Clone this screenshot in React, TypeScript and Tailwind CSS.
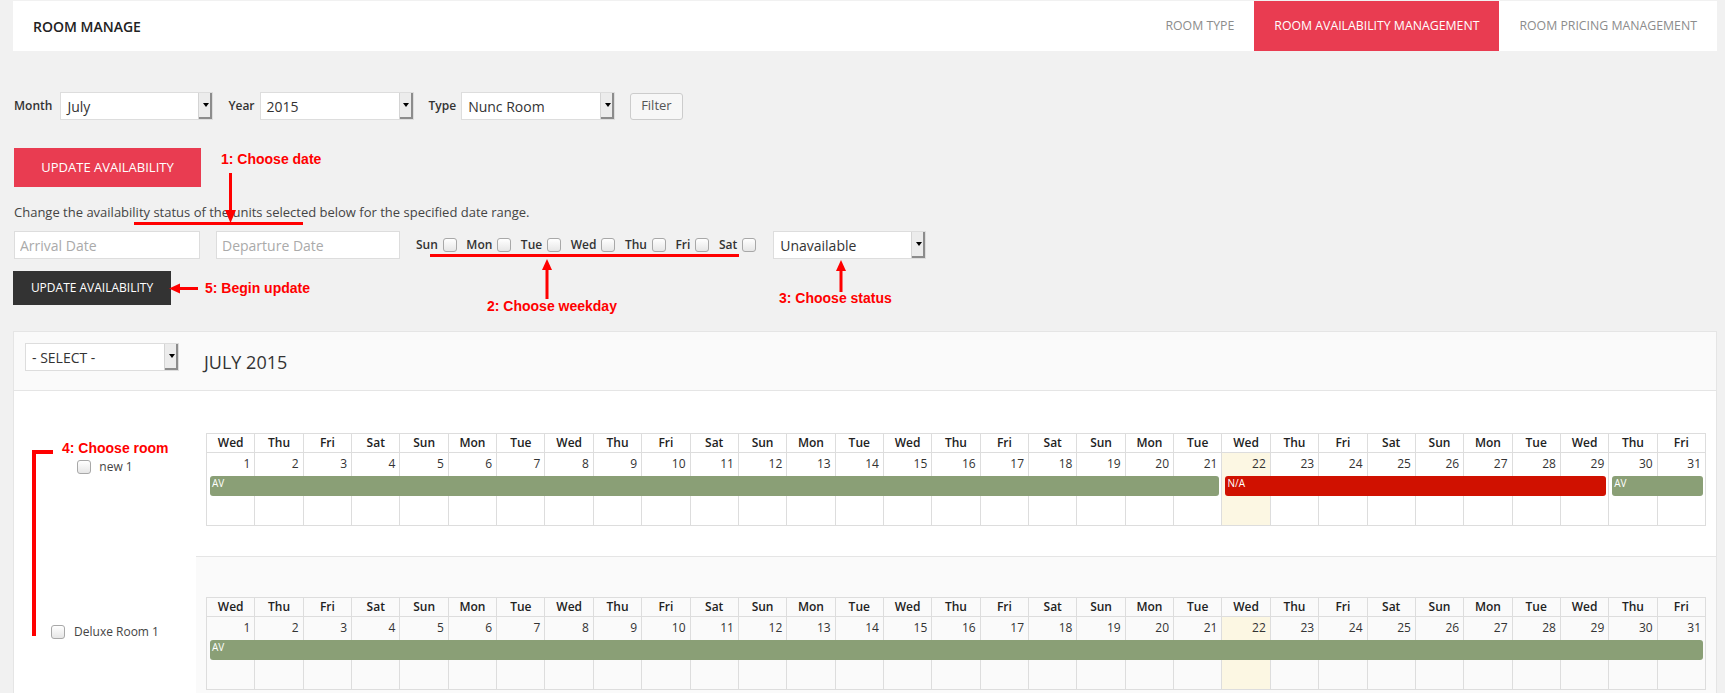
import React from 'react';
import clsx from 'clsx';

const WEEK = ['Wed', 'Thu', 'Fri', 'Sat', 'Sun', 'Mon', 'Tue'];
const DAYS = Array.from({ length: 31 }, (_, i) => ({ name: WEEK[i % 7], date: i + 1 }));
const TODAY = 22;

type Bar = { label: string; from: number; to: number; tone: 'av' | 'na' };

const ROOMS: { name: string; bars: Bar[] }[] = [
  {
    name: 'new 1',
    bars: [
      { label: 'AV', from: 1, to: 21, tone: 'av' },
      { label: 'N/A', from: 22, to: 29, tone: 'na' },
      { label: 'AV', from: 30, to: 31, tone: 'av' },
    ],
  },
  { name: 'Deluxe Room 1', bars: [{ label: 'AV', from: 1, to: 31, tone: 'av' }] },
];

const Caret = () => (
  <div className="flex w-[14px] shrink-0 items-center justify-center border-l border-[#d4d4d4] bg-[#ececec] shadow-[inset_-2px_-2px_0_#8c8c8c]">
    <span className="mb-[2px] border-x-[3px] border-t-[4px] border-x-transparent border-t-black" />
  </div>
);

const Select = ({ value, className }: { value: string; className?: string }) => (
  <div className={clsx('flex h-[28px] border border-[#ddd] bg-white', className)}>
    <div className="flex flex-1 items-center pl-[6px] text-[14px] text-[#333]">{value}</div>
    <Caret />
  </div>
);

const Check = () => (
  <span className="inline-block h-[14px] w-[14px] shrink-0 rounded-[3px] border border-[#a8a8a8] bg-linear-to-b from-white to-[#e6e6e6]" />
);

const Calendar = ({ bars }: { bars: Bar[] }) => (
  <div className="border-l border-t border-[#ddd] text-[12px]">
    <div className="grid grid-cols-[repeat(31,minmax(0,1fr))]">
      {DAYS.map((d) => (
        <div key={d.date} className="h-[19px] border-b border-r border-[#ddd] text-center font-semibold leading-[18px] text-[#222]">
          {d.name}
        </div>
      ))}
    </div>
    <div className="grid grid-cols-[repeat(31,minmax(0,1fr))] grid-rows-[22px_21px_30px]">
      {DAYS.map((d, i) => (
        <div
          key={'bg' + d.date}
          className={clsx('border-b border-r border-[#ddd]', d.date === TODAY && 'bg-[#fcf7e3]')}
          style={{ gridColumn: i + 1, gridRow: '1 / 4' }}
        />
      ))}
      {DAYS.map((d, i) => (
        <div key={'n' + d.date} className="pr-[5px] text-right leading-[22px] text-[#333]" style={{ gridColumn: i + 1, gridRow: 1 }}>
          {d.date}
        </div>
      ))}
      {bars.map((b) => (
        <div
          key={b.from}
          className={clsx(
            'mx-[3px] mt-px h-[20px] rounded-[3px] pl-[2px] text-[10px] leading-[15px] text-white',
            b.tone === 'av' ? 'bg-[#8a9f76]' : 'bg-[#d01100]'
          )}
          style={{ gridColumn: `${b.from} / ${b.to + 1}`, gridRow: 2 }}
        >
          {b.label}
        </div>
      ))}
    </div>
  </div>
);

const Note = ({ text, className }: { text: string; className: string }) => (
  <div className={clsx("absolute whitespace-nowrap font-['Liberation_Sans',Arial,sans-serif] text-[14px] font-bold leading-[16px] text-[#ff0000]", className)}>
    {text}
  </div>
);

export default function App() {
  return (
    <div className="relative min-h-screen overflow-hidden bg-[#f1f1f1] font-['Open_Sans','Noto_Sans',sans-serif] text-[#333]">
      <div className="pl-[13px] pr-[8px] pt-px">
        <header className="flex h-[50px] items-stretch justify-between bg-white">
          <div className="flex items-center pl-[20px] text-[14px] font-semibold text-[#222]">ROOM MANAGE</div>
          <nav className="flex text-[12.3px] uppercase">
            <div className="flex items-center px-[20px] text-[#8c8c8c]">Room Type</div>
            <div className="flex items-center bg-[#e93c51] px-[20px] text-white">Room Availability Management</div>
            <div className="flex items-center px-[20px] text-[#8c8c8c]">Room Pricing Management</div>
          </nav>
        </header>

        <div className="mt-[41px] flex h-[28px] items-center text-[12px]">
          <span className="ml-px font-semibold">Month</span>
          <Select value="July" className="ml-[8px] w-[153px]" />
          <span className="ml-[15px] font-semibold">Year</span>
          <Select value="2015" className="ml-[5px] w-[154px]" />
          <span className="ml-[15px] font-semibold">Type</span>
          <Select value="Nunc Room" className="ml-[5px] w-[154px]" />
          <button className="ml-[15px] h-[27px] rounded-[3px] border border-[#ccc] bg-[#f7f7f7] px-[10px] text-[13px] text-[#555]">
            Filter
          </button>
        </div>

        <button className="ml-px mt-[28px] h-[39px] w-[187px] bg-[#e93c51] text-[13px] uppercase text-white">Update Availability</button>

        <p className="ml-px mt-[15px] text-[13px] leading-[20px] text-[#444]">
          Change the availability status of the units selected below for the specified date range.
        </p>

        <div className="mt-[9px] flex h-[28px] items-center">
          <input
            placeholder="Arrival Date"
            className="ml-px h-[28px] w-[186px] border border-[#ddd] bg-white pl-[5px] text-[14px] outline-none placeholder:text-[#aaa]"
          />
          <input
            placeholder="Departure Date"
            className="ml-[16px] h-[28px] w-[184px] border border-[#ddd] bg-white pl-[5px] text-[14px] outline-none placeholder:text-[#aaa]"
          />
          <div className="ml-[16px] flex items-center text-[12px] font-semibold text-[#333]">
            {['Sun', 'Mon', 'Tue', 'Wed', 'Thu', 'Fri', 'Sat'].map((d, i) => (
              <div key={d} className={clsx('flex items-center gap-[5px]', i > 0 && 'ml-[9.5px]')}>
                <span>{d}</span>
                <Check />
              </div>
            ))}
          </div>
          <Select value="Unavailable" className="ml-[17px] w-[153px]" />
        </div>

        <button className="mt-[12px] h-[34px] w-[158px] bg-[#333] text-[12px] uppercase text-white">Update Availability</button>

        <div className="mt-[26px] border border-[#e5e5e5] bg-white">
          <div className="flex h-[59px] items-start border-b border-[#e5e5e5] bg-[#fafafa] pl-[11px] pt-[11px]">
            <Select value="- SELECT -" className="h-[26px] w-[154px]" />
            <div className="ml-[25px] mt-[7px] text-[18px] leading-[24px] text-[#333]">JULY 2015</div>
          </div>

          {ROOMS.map((room, r) => (
            <div key={room.name} className="flex">
              <div className="flex w-[182px] shrink-0 justify-center pt-[66px]">
                <div className={clsx('flex h-[20px] items-center text-[12px] text-[#444]', r === 0 ? 'gap-[8px]' : 'gap-[9px]')}>
                  <Check />
                  <span>{room.name}</span>
                </div>
              </div>
              <div
                className={clsx(
                  'flex-1 px-[10px] pb-[30px]',
                  r === 0 ? 'pt-[42px]' : 'border-t border-[#e5e5e5] bg-[#fafafa] pt-[40px]'
                )}
              >
                <Calendar bars={room.bars} />
              </div>
            </div>
          ))}
        </div>
      </div>

      <svg className="pointer-events-none absolute left-0 top-0" width="1725" height="693" fill="#ff0000">
        <rect x="134" y="222" width="169" height="3" />
        <rect x="229" y="173" width="3" height="40" />
        <polygon points="225,210 236,210 230.5,223" />
        <rect x="178" y="287" width="20" height="3" />
        <polygon points="169,288.5 180,283.5 180,293.5" />
        <rect x="430" y="254" width="309" height="3" />
        <polygon points="547,259 542,270 552,270" />
        <rect x="545.5" y="268" width="3" height="31" />
        <polygon points="841,260 836,271 846,271" />
        <rect x="839.5" y="269" width="3" height="23" />
        <rect x="32" y="450" width="21" height="4" />
        <rect x="32" y="450" width="4" height="186" />
      </svg>

      <Note text="1: Choose date" className="left-[221px] top-[151px]" />
      <Note text="5: Begin update" className="left-[205px] top-[280px]" />
      <Note text="2: Choose weekday" className="left-[487px] top-[298px]" />
      <Note text="3: Choose status" className="left-[779px] top-[290px]" />
      <Note text="4: Choose room" className="left-[62px] top-[440px]" />
    </div>
  );
}
